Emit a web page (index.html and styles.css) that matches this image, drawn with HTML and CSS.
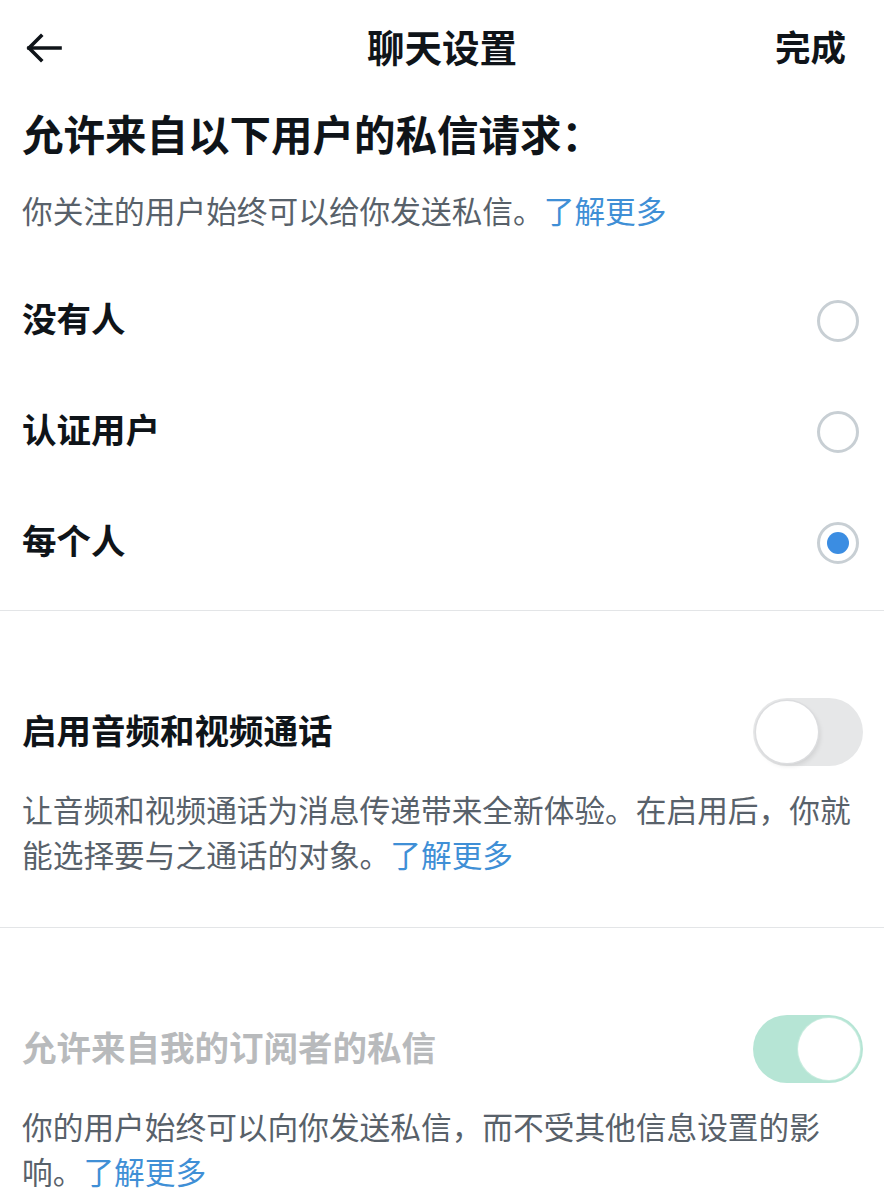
FILE: index.html
```html
<!DOCTYPE html>
<html lang="zh-CN">
<head>
<meta charset="utf-8">
<title>聊天设置</title>
<link rel="stylesheet" href="styles.css">
</head>
<body>
<div class="page">
  <header class="topbar">
    <div class="back">
      <svg width="38" height="32" viewBox="0 0 38 32" fill="none" stroke="#0f1419" stroke-width="3.6" stroke-linecap="square" stroke-linejoin="miter">
        <path d="M4 16 H35"/>
        <path d="M16 4 L4 16 L16 28"/>
      </svg>
    </div>
    <h1 class="title">聊天设置</h1>
    <div class="done">完成</div>
  </header>

  <section class="requests">
    <h2 class="heading">允许来自以下用户的私信请求：</h2>
    <p class="desc">你关注的用户始终可以给你发送私信。<span class="link">了解更多</span></p>
    <div class="options">
      <div class="option"><span class="label">没有人</span><span class="radio"></span></div>
      <div class="option"><span class="label">认证用户</span><span class="radio"></span></div>
      <div class="option"><span class="label">每个人</span><span class="radio checked"></span></div>
    </div>
  </section>

  <section class="block">
    <div class="toggle-row">
      <span class="label">启用音频和视频通话</span>
      <span class="switch off"><span class="knob"></span></span>
    </div>
    <p class="desc">让音频和视频通话为消息传递带来全新体验。在启用后，你就能选择要与之通话的对象。<span class="link">了解更多</span></p>
  </section>

  <section class="block last">
    <div class="toggle-row">
      <span class="label disabled">允许来自我的订阅者的私信</span>
      <span class="switch on-disabled"><span class="knob"></span></span>
    </div>
    <p class="desc">你的用户始终可以向你发送私信，而不受其他信息设置的影响。<span class="link">了解更多</span></p>
  </section>
</div>
</body>
</html>
```
FILE: styles.css
```css
* { box-sizing: border-box; }
html, body { margin: 0; padding: 0; background: #ffffff; }
body {
  font-family: "Noto Sans CJK SC", "Noto Sans", sans-serif;
  color: #0f1419;
}
.page { width: 884px; }

.topbar {
  height: 96px;
  display: grid;
  grid-template-columns: 1fr auto 1fr;
  align-items: center;
  padding: 0 38px;
}
.back { display: flex; align-items: center; margin-left: -13px; }
.back svg { display: block; }
.title {
  margin: 0 0 4px;
  font-size: 37.5px;
  font-weight: 700;
  line-height: 48px;
}
.done {
  justify-self: end;
  margin-bottom: 4px;
  font-size: 35.5px;
  font-weight: 700;
  line-height: 48px;
}

.requests { padding: 0 25px 0 22px; border-bottom: 1px solid #e3e5e7; }
.heading {
  margin: 12px 0 0;
  font-size: 41.5px;
  font-weight: 700;
  line-height: 50px;
}
.desc {
  margin: 0;
  font-size: 30.7px;
  line-height: 45px;
  color: #58616a;
}
.requests .desc { margin-top: 29px; }
.link { color: #3f8fd6; }

.options { margin-top: 33px; padding-bottom: 12px; }
.option {
  height: 111px;
  display: flex;
  align-items: center;
  justify-content: space-between;
}
.label {
  font-size: 34.5px;
  font-weight: 700;
  line-height: 48px;
  padding-bottom: 7px;
}
.label.disabled { color: #b8babc; }
.radio {
  width: 42px;
  height: 42px;
  border-radius: 50%;
  border: 3px solid #c8cfd4;
  display: flex;
  align-items: center;
  justify-content: center;
}
.radio.checked::after {
  content: "";
  width: 22px;
  height: 22px;
  border-radius: 50%;
  background: #3b8de2;
}

.block { padding: 87px 22px 51px; border-bottom: 1px solid #e3e5e7; }
.block.last { border-bottom: none; padding-bottom: 20px; }
.toggle-row {
  height: 68px;
  display: flex;
  align-items: center;
  justify-content: space-between;
}
.block .desc { margin-top: 20px; }
.block.last .desc { margin-top: 20px; }

.switch {
  width: 110px;
  height: 68px;
  border-radius: 34px;
  display: flex;
  align-items: center;
  padding: 0 3px;
  margin-right: -1px;
}
.switch .knob {
  width: 62px;
  height: 62px;
  border-radius: 50%;
  background: #ffffff;
}
.switch.off { background: #e6e7e8; justify-content: flex-start; }
.switch.off .knob { box-shadow: 0 0 0 1.5px #dcdddf, 2px 3px 5px rgba(0,0,0,0.10); }
.switch.on-disabled { background: #b6e5d5; justify-content: flex-end; }
.switch.on-disabled .knob { box-shadow: 0 0 0 1px #c9ecdf; }
```
